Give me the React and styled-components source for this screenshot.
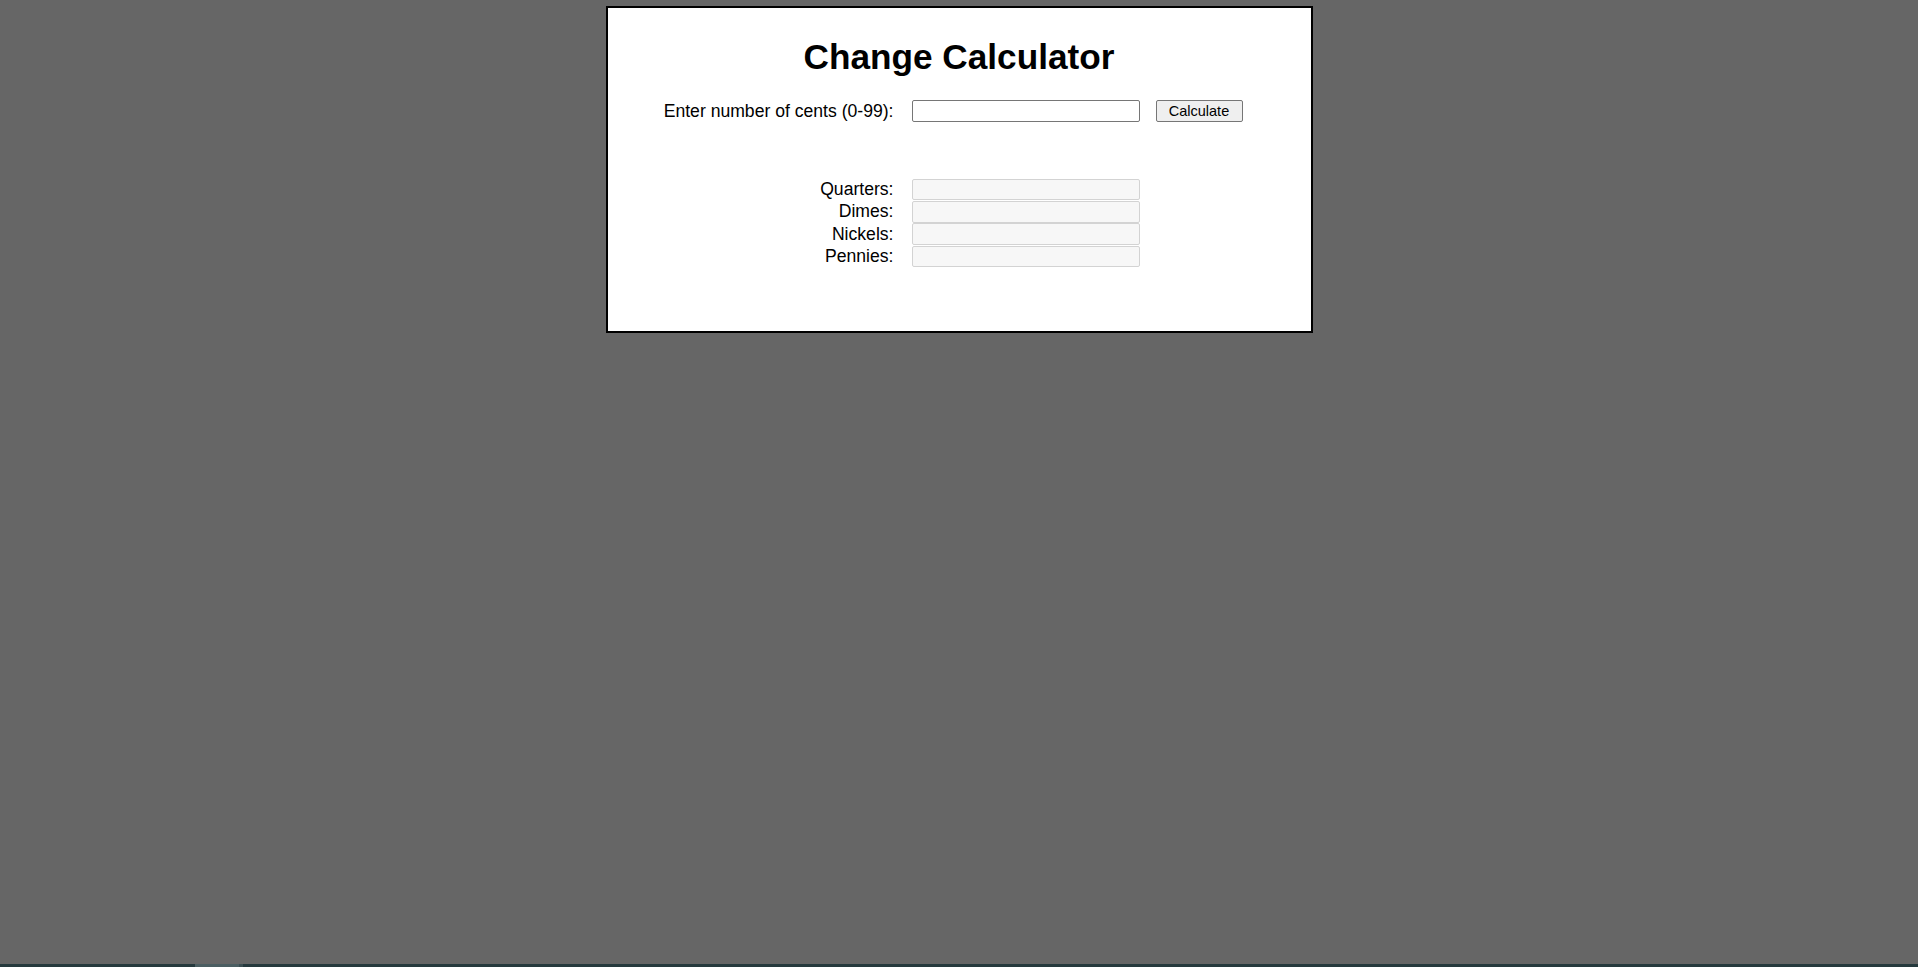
import styled, { createGlobalStyle } from 'styled-components';

const GlobalStyle = createGlobalStyle`
    html, body {
        margin: 0;
        padding: 0;
        height: 100%;
        background: #666666;
        font-family: "Liberation Sans", Arial, sans-serif;
    }
    #root {
        height: 100%;
    }
`;

const Page = styled.div`
    height: 100%;
    display: flex;
    flex-direction: column;
    align-items: center;
`;

const Panel = styled.div`
    box-sizing: border-box;
    width: 707px;
    height: 327px;
    margin-top: 6px;
    background: #ffffff;
    border: 2px solid #000000;
    padding: 29px 0 0 54px;
`;

const Title = styled.h1`
    margin: 0 0 23px -54px;
    text-align: center;
    font-size: 35.2px;
    font-weight: bold;
    color: #000000;
`;

const Row = styled.div`
    display: flex;
    align-items: center;
    height: ${props => props.height || '22px'};
    margin-bottom: ${props => props.gap || '0'};
`;

const Label = styled.label`
    flex-shrink: 0;
    width: 232px;
    margin-right: 18px;
    text-align: right;
    white-space: nowrap;
    font-size: 17.6px;
    color: #000000;
`;

const Field = styled.input`
    box-sizing: border-box;
    flex-shrink: 0;
    width: 228px;
    height: ${props => props.readOnly ? '21.5px' : '22px'};
    margin: 0;
    padding: 1px 2px;
    font-family: inherit;
    font-size: 14.6px;
    border: 1px solid ${props => props.readOnly ? '#d3d3d3' : '#767676'};
    border-radius: 2px;
    background: ${props => props.readOnly ? '#f7f7f7' : '#ffffff'};
    outline: none;
`;

const Button = styled.button`
    box-sizing: border-box;
    flex-shrink: 0;
    width: 87px;
    height: 22px;
    margin-left: 16px;
    padding: 0;
    font-family: inherit;
    font-size: 14.5px;
    color: #000000;
    background: #efefef;
    border: 1px solid #767676;
    border-radius: 2px;
`;

const Results = styled.div`
    display: flex;
    flex-direction: column;
    gap: 0.8px;
`;

const TaskBar = styled.div`
    margin-top: auto;
    align-self: stretch;
    height: 3px;
    display: flex;
    background: #25393d;
`;

const TaskItem = styled.div`
    margin-left: ${props => props.offset}px;
    width: ${props => props.size}px;
    background: ${props => props.color};
`;

const coins = ['Quarters', 'Dimes', 'Nickels', 'Pennies'];

const App = () => {
    return (
        <Page>
            <GlobalStyle />
            <Panel>
                <Title>Change Calculator</Title>
                <Row gap="56.8px">
                    <Label htmlFor="cents">Enter number of cents (0-99):</Label>
                    <Field id="cents" type="text" />
                    <Button>Calculate</Button>
                </Row>
                <Results>
                    {coins.map(coin => (
                        <Row key={coin} height="21.5px">
                            <Label>{coin}:</Label>
                            <Field type="text" readOnly />
                        </Row>
                    ))}
                </Results>
            </Panel>
            <TaskBar>
                <TaskItem offset={195} size={44} color="#4b5e62" />
                <TaskItem offset={0} size={4} color="#3b4e52" />
            </TaskBar>
        </Page>
    );
};

export default App;
